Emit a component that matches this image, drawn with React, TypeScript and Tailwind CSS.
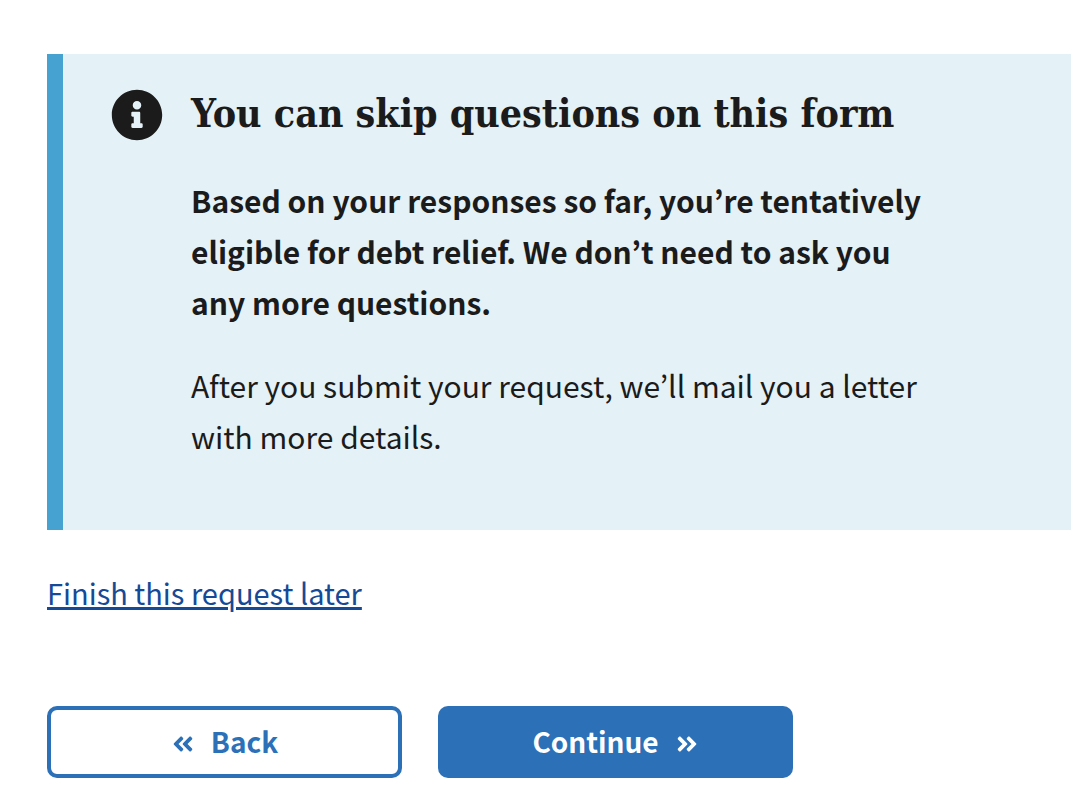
import { FaAngleDoubleLeft, FaAngleDoubleRight, FaInfoCircle } from "react-icons/fa";

export default function App() {
  return (
    <main className="min-h-screen bg-white pt-[54px] pr-[21px] pb-6 pl-[47px] font-['Noto_Sans_CJK_KR','Noto_Sans',sans-serif] text-[#1b1b1b]">
      <section aria-labelledby="notice-title" className="flex gap-7 border-l-16 border-[#46a3d1] bg-[#e4f1f7] pt-8 pr-12 pb-[68px] pl-12">
        <FaInfoCircle aria-hidden="true" className="mt-[3px] size-[52px] shrink-0" />
        <div className="max-w-[760px]">
          <h1 id="notice-title" className="font-['DejaVu_Serif_Condensed','DejaVu_Serif',serif] text-[39px] leading-[54px] font-bold whitespace-nowrap">
            You can skip questions on this form
          </h1>
          <p className="mt-[35px] text-[30px] leading-[51px] font-bold">
            Based on your responses so far, you’re tentatively<br />eligible for debt relief. We don’t need to ask you<br />any more questions.
          </p>
          <p className="mt-8 text-[30px] leading-[51px]">
            After you submit your request, we’ll mail you a letter<br />with more details.
          </p>
        </div>
      </section>
      <a href="#later" className="mt-10 inline-block text-[29px] leading-11 text-[#164a96] underline decoration-3 underline-offset-2">
        Finish this request later
      </a>
      <div className="mt-[92px] flex gap-9 text-[28px] font-bold">
        <button type="button" className="flex h-18 w-[355px] items-center justify-center gap-4 rounded-[10px] border-4 border-[#2c70b8] pb-[2px] text-[#2c70b8]">
          <FaAngleDoubleLeft aria-hidden="true" className="mt-[6px] size-6" />Back
        </button>
        <button type="button" className="flex h-18 w-[355px] items-center justify-center gap-4 rounded-[10px] bg-[#2c70b8] pb-[2px] text-white">
          Continue<FaAngleDoubleRight aria-hidden="true" className="mt-[6px] size-6" />
        </button>
      </div>
    </main>
  );
}
